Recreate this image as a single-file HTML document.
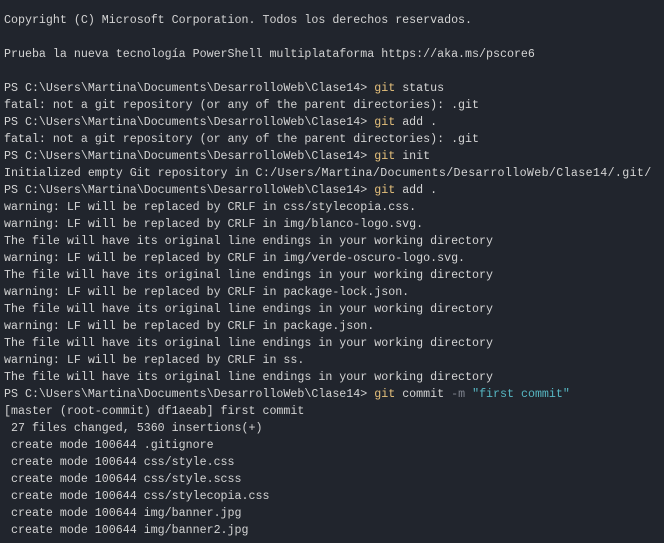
<!DOCTYPE html>
<html><head><meta charset="utf-8"><style>
html,body{margin:0;padding:0;background:#21252d;width:664px;height:543px;overflow:hidden}
pre{margin:0;position:absolute;left:4px;top:12px;font-family:"Liberation Mono","DejaVu Sans Mono",monospace;font-size:11.65px;line-height:17px;color:#d4d4d4;white-space:pre}
.y{color:#e5c07b}.g{color:#7f848e}.c{color:#56b6c2}
</style></head><body><pre>Copyright (C) Microsoft Corporation. Todos los derechos reservados.

Prueba la nueva tecnología PowerShell multiplataforma https://aka.ms/pscore6

PS C:\Users\Martina\Documents\DesarrolloWeb\Clase14&gt; <span class="y">git</span> status
fatal: not a git repository (or any of the parent directories): .git
PS C:\Users\Martina\Documents\DesarrolloWeb\Clase14&gt; <span class="y">git</span> add .
fatal: not a git repository (or any of the parent directories): .git
PS C:\Users\Martina\Documents\DesarrolloWeb\Clase14&gt; <span class="y">git</span> init
Initialized empty Git repository in <span style="letter-spacing:0.35px">C:/Users/Martina/Documents/DesarrolloWeb/Clase14/.git/</span>
PS C:\Users\Martina\Documents\DesarrolloWeb\Clase14&gt; <span class="y">git</span> add .
warning: LF will be replaced by CRLF in css/stylecopia.css.
warning: LF will be replaced by CRLF in img/blanco-logo.svg.
The file will have its original line endings in your working directory
warning: LF will be replaced by CRLF in img/verde-oscuro-logo.svg.
The file will have its original line endings in your working directory
warning: LF will be replaced by CRLF in package-lock.json.
The file will have its original line endings in your working directory
warning: LF will be replaced by CRLF in package.json.
The file will have its original line endings in your working directory
warning: LF will be replaced by CRLF in ss.
The file will have its original line endings in your working directory
PS C:\Users\Martina\Documents\DesarrolloWeb\Clase14&gt; <span class="y">git</span> commit <span class="g">-m</span> <span class="c">"first commit"</span>
[master (root-commit) df1aeab] first commit
 27 files changed, 5360 insertions(+)
 create mode 100644 .gitignore
 create mode 100644 css/style.css
 create mode 100644 css/style.scss
 create mode 100644 css/stylecopia.css
 create mode 100644 img/banner.jpg
 create mode 100644 img/banner2.jpg
</pre></body></html>
